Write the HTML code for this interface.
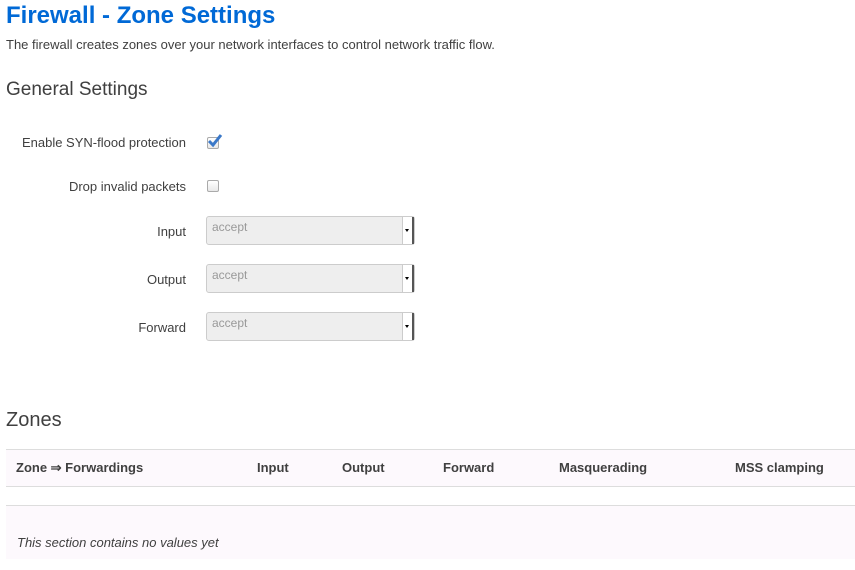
<!DOCTYPE html>
<html><head><meta charset="utf-8"><style>
body{margin:0;background:#fff;font-family:"Liberation Sans",sans-serif;color:#404040;width:855px;height:570px;overflow:hidden;position:relative}
.a{position:absolute;white-space:nowrap}
h1{position:absolute;left:6px;top:2px;margin:0;font-size:24px;font-weight:bold;color:#0069d6}
.lbl{position:absolute;font-size:13px;color:#404040;right:669px;text-align:right}
.cb{position:absolute;left:207px;width:10px;height:10px;border:1px solid #aaa;border-radius:2px;background:linear-gradient(#fff,#e8e8e8)}
.sel{position:absolute;left:206px;width:209px;height:29px;border:1px solid #ccc;border-radius:3px;background:#eee;box-sizing:border-box}
.sel span{position:absolute;left:5px;top:3px;font-size:12px;color:#999}
.sel i{position:absolute;right:0;top:0;width:12px;height:27px;background:#fff;border-left:1px solid #ccc;border-right:2px solid #555;box-sizing:border-box}
.sel i:after{content:"";position:absolute;left:2px;top:12px;border:2.5px solid transparent;border-top:3px solid #000}
.th{position:absolute;top:460px;font-size:13px;font-weight:bold;color:#404040}
</style></head><body>
<h1>Firewall - Zone Settings</h1>
<div class="a" style="left:6px;top:37px;font-size:13px">The firewall creates zones over your network interfaces to control network traffic flow.</div>
<div class="a" style="left:6px;top:79px;font-size:19px">General Settings</div>
<div class="lbl" style="top:135px">Enable SYN-flood protection</div>
<div class="cb" style="top:137px"></div>
<svg class="a" style="left:206px;top:133px" width="17" height="15"><path d="M3 8 L7 12 L15 2" stroke="#3a78c8" stroke-width="3" fill="none"/></svg>
<div class="lbl" style="top:179px">Drop invalid packets</div>
<div class="cb" style="top:180px"></div>
<div class="lbl" style="top:224px">Input</div>
<div class="sel" style="top:216px"><span>accept</span><i></i></div>
<div class="lbl" style="top:272px">Output</div>
<div class="sel" style="top:264px"><span>accept</span><i></i></div>
<div class="lbl" style="top:320px">Forward</div>
<div class="sel" style="top:312px"><span>accept</span><i></i></div>
<div class="a" style="left:6px;top:409px;font-size:20px">Zones</div>
<div class="a" style="left:6px;top:449px;width:849px;height:37px;background:#fdf9fd"></div>
<div class="a" style="left:6px;top:505px;width:849px;height:54px;background:#fdf9fd"></div>
<div class="a" style="left:6px;top:449px;width:849px;height:1px;background:#ddd"></div>
<div class="a" style="left:6px;top:486px;width:849px;height:1px;background:#ddd"></div>
<div class="a" style="left:6px;top:505px;width:849px;height:1px;background:#ddd"></div>
<div class="th" style="left:16px">Zone ⇒ Forwardings</div>
<div class="th" style="left:257px">Input</div>
<div class="th" style="left:342px">Output</div>
<div class="th" style="left:443px">Forward</div>
<div class="th" style="left:559px">Masquerading</div>
<div class="th" style="left:735px">MSS clamping</div>
<div class="a" style="left:17px;top:535px;font-size:13px;font-style:italic">This section contains no values yet</div>
</body></html>
